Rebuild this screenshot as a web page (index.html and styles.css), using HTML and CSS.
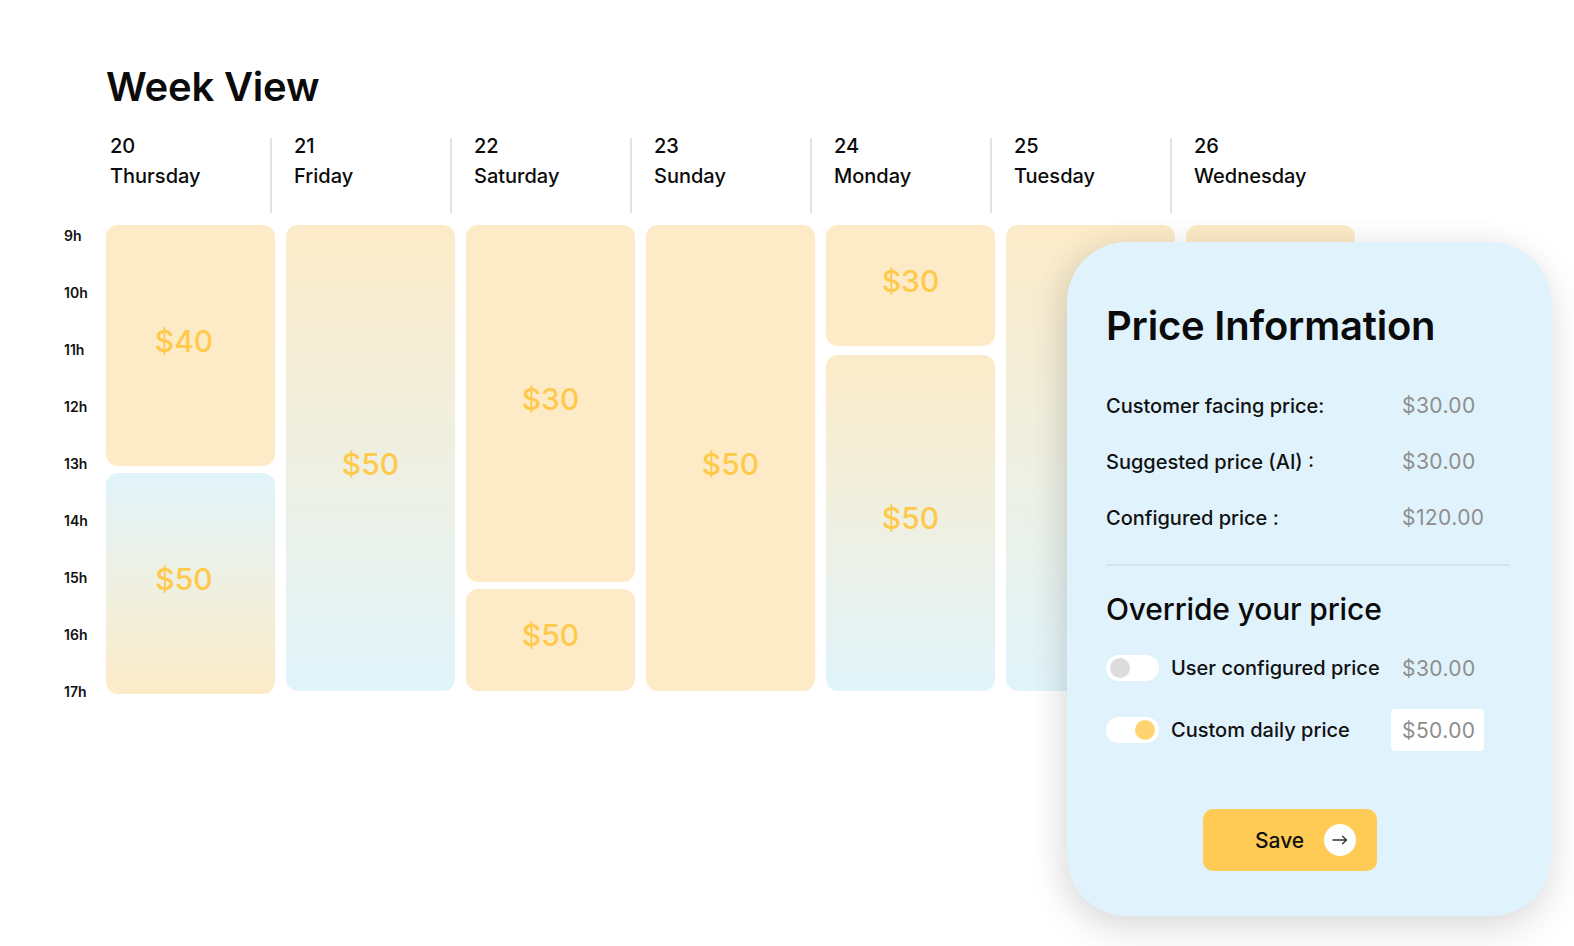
FILE: index.html
```html
<!DOCTYPE html>
<html lang="en">
<head>
<meta charset="utf-8">
<title>Week View</title>
<link rel="stylesheet" href="styles.css">
</head>
<body>
<div class="page">
  <h1 class="title">Week View</h1>
  <div class="week">
    <div class="corner"></div>
    <div class="day-head first"><span class="num">20</span><span class="name">Thursday</span></div>
    <div class="day-head"><span class="num">21</span><span class="name">Friday</span></div>
    <div class="day-head"><span class="num">22</span><span class="name">Saturday</span></div>
    <div class="day-head"><span class="num">23</span><span class="name">Sunday</span></div>
    <div class="day-head"><span class="num">24</span><span class="name">Monday</span></div>
    <div class="day-head"><span class="num">25</span><span class="name">Tuesday</span></div>
    <div class="day-head"><span class="num">26</span><span class="name">Wednesday</span></div>

    <div class="hours">
      <span>9h</span><span>10h</span><span>11h</span><span>12h</span><span>13h</span><span>14h</span><span>15h</span><span>16h</span><span>17h</span>
    </div>
    <div class="day first">
      <div class="slot cream" style="height:241px"><span>$40</span></div>
      <div class="slot blue-cream" style="height:221px"><span>$50</span></div>
    </div>
    <div class="day">
      <div class="slot cream-blue low" style="height:466px"><span>$50</span></div>
    </div>
    <div class="day">
      <div class="slot cream" style="height:357px"><span>$30</span></div>
      <div class="slot cream" style="height:102px"><span>$50</span></div>
    </div>
    <div class="day">
      <div class="slot cream low" style="height:466px"><span>$50</span></div>
    </div>
    <div class="day wide-gap">
      <div class="slot cream" style="height:121px"><span>$30</span></div>
      <div class="slot cream-blue" style="height:336px"><span>$50</span></div>
    </div>
    <div class="day">
      <div class="slot cream-blue" style="height:466px"></div>
    </div>
    <div class="day">
      <div class="slot cream" style="height:466px"></div>
    </div>
  </div>

  <aside class="panel">
    <h2 class="panel-title">Price Information</h2>
    <div class="info-row"><span class="info-label">Customer facing price:</span><span class="info-value">$30.00</span></div>
    <div class="info-row"><span class="info-label">Suggested price (AI) :</span><span class="info-value">$30.00</span></div>
    <div class="info-row"><span class="info-label">Configured price :</span><span class="info-value">$120.00</span></div>
    <hr class="divider">
    <h3 class="override-title">Override your price</h3>
    <div class="toggle-row">
      <span class="toggle"><span class="knob off"></span></span>
      <span class="toggle-label">User configured price</span>
      <span class="toggle-value">$30.00</span>
    </div>
    <div class="toggle-row">
      <span class="toggle on"><span class="knob yellow"></span></span>
      <span class="toggle-label">Custom daily price</span>
      <span class="toggle-value boxed">$50.00</span>
    </div>
    <button class="save" type="button">
      <span class="save-text">Save</span>
      <span class="save-icon">
        <svg width="16" height="10" viewBox="0 0 16 10" fill="none" stroke="#333" stroke-width="1.3" stroke-linecap="round" stroke-linejoin="round"><path d="M1 5h13.5M10.5 1.2l4 3.8-4 3.8"/></svg>
      </span>
    </button>
  </aside>
</div>
</body>
</html>
```
FILE: styles.css
```css
* { box-sizing: border-box; }

html, body {
  margin: 0;
  padding: 0;
  background: #ffffff;
}

body {
  font-family: "Inter", "Noto Sans", sans-serif;
  color: #0b0b0b;
}

.page {
  position: relative;
  width: 1574px;
  height: 946px;
  overflow: hidden;
}

.title {
  margin: 63px 0 27px 106px;
  font-size: 40px;
  line-height: 48px;
  font-weight: 600;
  letter-spacing: -0.005em;
}

.week {
  display: grid;
  grid-template-columns: 31px repeat(7, 169px);
  column-gap: 11px;
  row-gap: 12px;
  margin-left: 64px;
  align-items: start;
}

.day-head {
  height: 75px;
  display: flex;
  flex-direction: column;
  margin-left: -16px;
  padding-left: 22px;
  border-left: 2px solid #e3e3e3;
  font-size: 20px;
  font-weight: 500;
}

.day-head.first {
  margin-left: 0;
  padding-left: 4px;
  border-left: none;
}

.day-head .num {
  line-height: 16px;
}

.day-head .name {
  margin-top: 7px;
  line-height: 30px;
}

.hours {
  display: flex;
  flex-direction: column;
  gap: 35px;
  font-size: 14px;
  line-height: 22px;
  font-weight: 600;
  color: #111;
}

.day {
  display: flex;
  flex-direction: column;
  gap: 7px;
}

.day.wide-gap {
  gap: 9px;
}

.slot {
  border-radius: 12px;
  display: flex;
  align-items: center;
  justify-content: center;
  padding-bottom: 10px;
  font-size: 30px;
  font-weight: 500;
  color: #ffc94a;
}

.slot.low {
  padding-bottom: 0;
  padding-top: 12px;
}

.day.first .slot {
  padding-right: 13px;
}

.cream { background: #fdebc7; }
.blue-cream { background: linear-gradient(to bottom, #e1f4fb 0%, #fcebc8 100%); }
.cream-blue { background: linear-gradient(to bottom, #fcebc8 0%, #e1f4fb 100%); }

.panel {
  position: absolute;
  left: 1067px;
  top: 242px;
  width: 484px;
  padding: 60px 41px 45px 39px;
  border-radius: 60px;
  background: #e0f3fd;
  box-shadow: 0 14px 40px rgba(0, 0, 0, 0.12), -8px 0 30px rgba(0, 0, 0, 0.05);
}

.panel-title {
  margin: 0 0 42px;
  font-size: 40px;
  line-height: 48px;
  font-weight: 600;
  letter-spacing: -0.005em;
}

.info-row {
  display: flex;
  font-size: 20px;
  line-height: 28px;
  margin-bottom: 28px;
}

.info-row:last-of-type {
  margin-bottom: 0;
}

.info-label {
  flex: none;
  width: 296px;
  font-weight: 500;
  color: #111;
}

.info-value {
  color: #8e8e8e;
  font-size: 21px;
  font-weight: 400;
  letter-spacing: 0.02em;
}

.divider {
  margin: 32px 0 0;
  border: none;
  height: 2px;
  background: #d3e4ed;
}

.override-title {
  margin: 25px 0 20px;
  font-size: 30px;
  line-height: 36px;
  font-weight: 500;
  letter-spacing: -0.005em;
}

.toggle-row {
  display: flex;
  align-items: center;
  height: 42px;
  margin-bottom: 20px;
  font-size: 20px;
}

.toggle {
  flex: none;
  width: 53px;
  height: 26px;
  border-radius: 13px;
  background: #ffffff;
  display: flex;
  align-items: center;
  padding: 0 4px;
}

.toggle.on {
  justify-content: flex-end;
}

.knob {
  width: 20px;
  height: 20px;
  border-radius: 50%;
}

.knob.off { background: #dcdcdc; }
.knob.yellow { background: #ffd470; }

.toggle-label {
  flex: none;
  width: 220px;
  margin-left: 12px;
  font-weight: 500;
  color: #111;
}

.toggle-value {
  display: flex;
  align-items: center;
  height: 42px;
  width: 93px;
  padding-left: 11px;
  color: #8e8e8e;
  font-size: 21px;
  letter-spacing: 0.02em;
}

.toggle-value.boxed {
  background: #ffffff;
  border-radius: 4px;
}

.save {
  display: flex;
  align-items: center;
  width: 174px;
  height: 62px;
  margin: 58px 0 0 97px;
  padding: 0 0 0 52px;
  border: none;
  border-radius: 10px;
  background: #ffcb55;
  font-family: inherit;
  font-size: 21px;
  font-weight: 500;
  color: #111;
}

.save-icon {
  margin-left: 20px;
  width: 32px;
  height: 32px;
  border-radius: 50%;
  background: #ffffff;
  display: flex;
  align-items: center;
  justify-content: center;
}
```
